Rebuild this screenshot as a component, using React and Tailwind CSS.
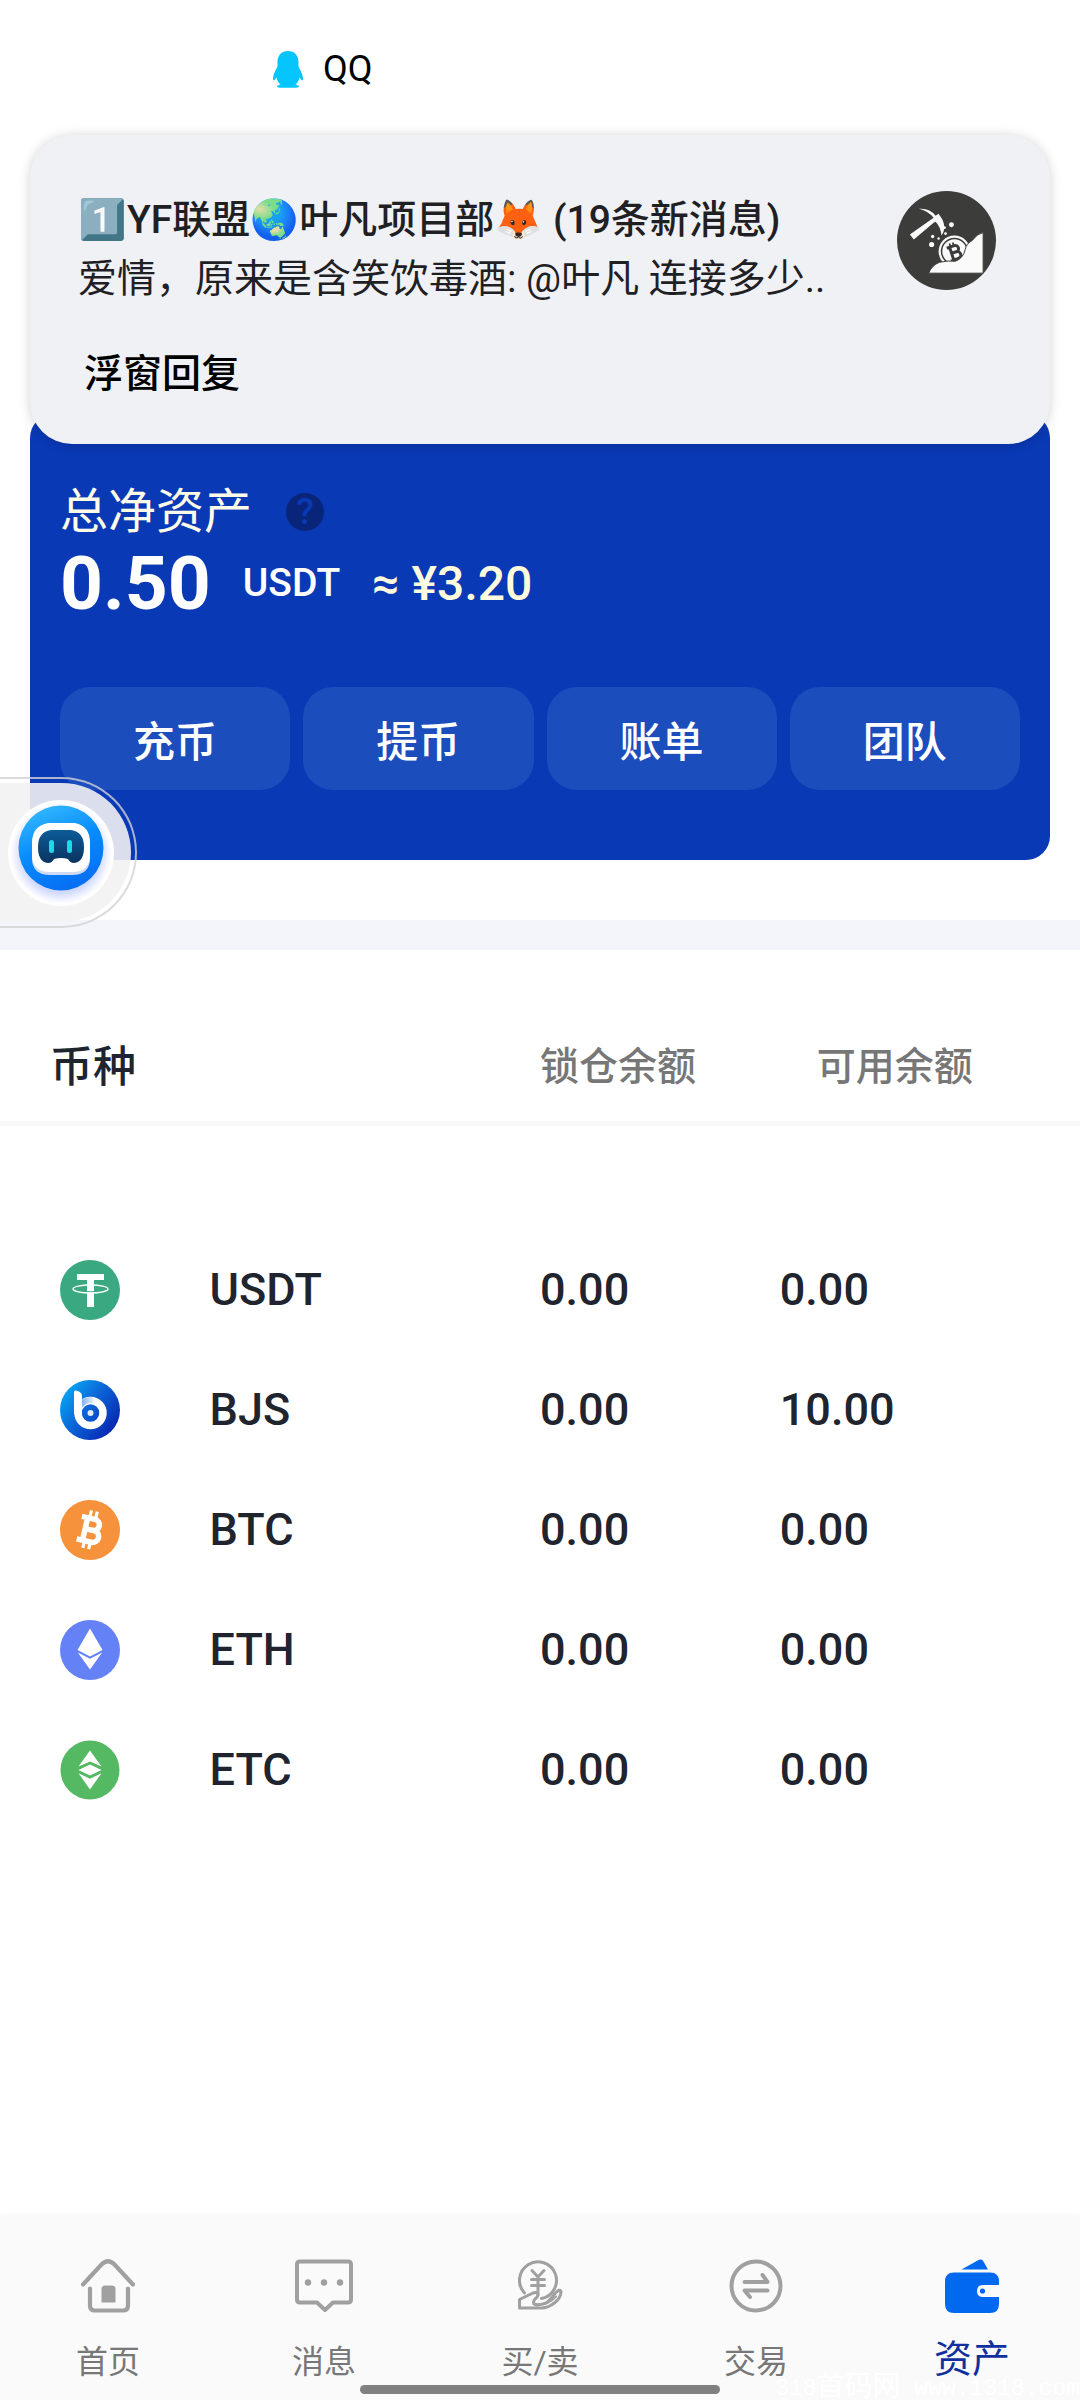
import React from "react";

const coins = [
  { name: "USDT", icon: UsdtIcon, locked: "0.00", available: "0.00" },
  { name: "BJS", icon: BjsIcon, locked: "0.00", available: "10.00" },
  { name: "BTC", icon: BtcIcon, locked: "0.00", available: "0.00" },
  { name: "ETH", icon: EthIcon, locked: "0.00", available: "0.00" },
  { name: "ETC", icon: EtcIcon, locked: "0.00", available: "0.00" },
];

const tabs = [
  { label: "首页", icon: HomeIcon },
  { label: "消息", icon: MessageIcon },
  { label: "买/卖", icon: BuySellIcon },
  { label: "交易", icon: TradeIcon },
  { label: "资产", icon: WalletIcon, active: true },
];

function UsdtIcon() {
  return (
    <svg viewBox="0 0 60 60" className="size-15" aria-hidden="true">
      <circle cx="30" cy="30" r="30" fill="#3aa981" />
      <path d="M17 14h27v6H34v27h-7V20H17z" fill="#fff" />
      <ellipse cx="30.500" cy="29" rx="17.500" ry="4" fill="none" stroke="#fff" strokeWidth="1.400" />
      <path d="M27 31.500q3.500 .3 7 0" stroke="#3aa981" strokeWidth=".9" fill="none" />
    </svg>
  );
}

function BjsIcon() {
  return (
    <svg viewBox="0 0 60 60" className="size-15" aria-hidden="true">
      <defs>
        <linearGradient id="bjs" x1="0" y1="0.200" x2="0.900" y2="0.900">
          <stop offset="0" stopColor="#06a9f4" />
          <stop offset="0.450" stopColor="#0b66d8" />
          <stop offset="1" stopColor="#0622ae" />
        </linearGradient>
        <linearGradient id="bjsTail" x1="0" y1="0" x2="1" y2="0">
          <stop offset="0" stopColor="#7fb2ee" />
          <stop offset="1" stopColor="#fff" />
        </linearGradient>
      </defs>
      <circle cx="30" cy="30" r="30" fill="url(#bjs)" />
      <path d="M14 12q0-2 2-1.500l3.500 1.200Q22 13 22 16v18h-8z" fill="#fff" />
      <circle cx="30.500" cy="33" r="12.500" fill="none" stroke="#fff" strokeWidth="7.500" />
      <path d="M22 19.500q7-4.500 14-1l-1 6q-6-4-13 3z" fill="url(#bjsTail)" />
      <circle cx="30.500" cy="33" r="3" fill="#e3ebfa" />
    </svg>
  );
}

function BtcIcon() {
  return (
    <svg viewBox="0 0 60 60" className="size-15" aria-hidden="true">
      <circle cx="30" cy="30" r="30" fill="#f6923c" />
      <g transform="rotate(13 30 30)" stroke="#fff" fill="none">
        <path d="M19 18.500h13.500a5.600 5.600 0 0 1 0 11.200H25M32.500 29.700h1.500a6 6 0 0 1 0 12H19M25 18v23" strokeWidth="5.500" />
        <path d="M27 10.500v7M33 10.500v7M27 42v7M33 42v7" strokeWidth="3.200" />
      </g>
    </svg>
  );
}

function EthIcon() {
  return (
    <svg viewBox="0 0 60 60" className="size-15" aria-hidden="true">
      <circle cx="30" cy="30" r="30" fill="#6481f6" />
      <path d="M30 8.500 42.500 30 30 36.500 17.500 30z" fill="#fff" />
      <path d="M17.800 32.500 30 38.700l12.200-6.200L30 49.500z" fill="#fff" />
    </svg>
  );
}

function EtcIcon() {
  return (
    <svg viewBox="0 0 60 60" className="size-15" aria-hidden="true">
      <circle cx="30" cy="30" r="29.500" fill="#55b862" />
      <path d="M30 10.500 41.500 26.500 30 21.500 18.500 26.500z" fill="#fff" />
      <path d="M18.500 30 30 24.500 41.500 30 30 35.500z" fill="#fff" />
      <path d="M18.500 33.200 30 38.800l11.500-5.600L30 49.500z" fill="#fff" />
    </svg>
  );
}

function HomeIcon() {
  return (
    <svg viewBox="0 0 54 54" className="size-[54px]" fill="none" stroke="#a0a0a0" strokeLinecap="round" aria-hidden="true">
      <path d="M2 25.500 20.500 5.500q6.500-6.500 13 0L52 25.500" strokeWidth="4.200" />
      <path d="M9 29.500v17q0 5 5 5h28q5 0 5-5v-17" strokeWidth="4.200" />
      <path d="M20.500 43.500V30q0-3.500 3.500-3.500h7q3.500 0 3.500 3.500v13.500z" fill="#a0a0a0" stroke="none" />
    </svg>
  );
}

function MessageIcon() {
  return (
    <svg viewBox="0 0 58 54" className="h-[54px] w-[58px]" fill="none" stroke="#a0a0a0" aria-hidden="true">
      <path d="M5 2.500h48q3 0 3 3v35q0 3-3 3H38l-8 7.500-8-7.500H5q-3 0-3-3v-35q0-3 3-3z" strokeWidth="4" strokeLinejoin="round" />
      <g fill="#a0a0a0" stroke="none">
        <circle cx="13" cy="23.500" r="3.200" />
        <circle cx="29" cy="23.500" r="3.200" />
        <circle cx="45" cy="23.500" r="3.200" />
      </g>
    </svg>
  );
}

function BuySellIcon() {
  return (
    <svg viewBox="0 0 54 54" className="size-[54px]" fill="none" stroke="#a0a0a0" strokeWidth="3" strokeLinejoin="round" strokeLinecap="round" aria-hidden="true">
      <path d="M11.500 34A18.500 18.500 0 1 1 28.500 39.500" />
      <path d="M19 11.500l6 6.500 6-6.500M25 18v17M18.500 20.500h13M18.500 26.500h13" />
      <path d="M6.500 40.500 20 34q5-1.500 5 2-.3 2-3 4-3 4 0 5.500 9 1 14-4l7-8q4-4 5-1 0 6-6 11-7 5.500-13 5.500H6.500z" />
      <path d="M23 45.500q12 1 20-8" strokeWidth="2" />
    </svg>
  );
}

function TradeIcon() {
  return (
    <svg viewBox="0 0 54 54" className="size-[54px]" fill="none" stroke="#a0a0a0" strokeLinecap="round" strokeLinejoin="round" aria-hidden="true">
      <circle cx="27" cy="27" r="24.500" strokeWidth="4" />
      <path d="M15.500 23h23l-5-7M38.500 31.500h-23l5.500 6.500" strokeWidth="4" />
    </svg>
  );
}

function WalletIcon() {
  return (
    <svg viewBox="0 0 54 54" className="size-[54px]" fill="#0168f0" aria-hidden="true">
      <path d="M16.500 10.500 34 .8q2.500-1.200 4 1L43 10.500z" />
      <path d="M9 13.500h36q9 0 9 9V26H38q-6 0-6 6t6 6h16v7q0 9-9 9H9q-9 0-9-9V22.500q0-9 9-9z" />
      <circle cx="37.500" cy="32" r="2.600" />
    </svg>
  );
}

function QqIcon() {
  return (
    <svg viewBox="0 0 30 37" className="h-[37px] w-[30px]" fill="#06c5fd" aria-hidden="true">
      <path d="M15 0C8.500 0 4.500 4.500 4.500 11v4.500C2 20 .4 23.500 0 27c-.2 2.500.6 3 1.600 2l1.900-2.500c.6 3 2 5.400 4 7.200-2.500.4-3.500 1-3.500 1.700 0 1.200 4 1.400 11 1.400s11-.2 11-1.400c0-.7-1-1.300-3.500-1.700 2-1.800 3.400-4.200 4-7.200l1.900 2.500c1 1 1.800.5 1.600-2-.4-3.500-2-7-4.500-11.500V11C25.500 4.500 21.500 0 15 0z" />
    </svg>
  );
}

function GroupAvatar() {
  return (
    <svg viewBox="0 0 100 100" className="size-[99px] shrink-0" role="img" aria-label="群头像">
      <circle cx="50" cy="50" r="50" fill="#3c3c3a" />
      <path d="M22 18q11-1 17 7l3-2 4 6q4 9-1 16-1-9-6-14l-2 1L17 49l-4-5 24-17q-6-7-15-9z" fill="#fafafa" />
      <g fill="#fafafa">
        <circle cx="55" cy="34" r="2.500" />
        <circle cx="48" cy="37" r="1.400" />
        <circle cx="49" cy="43" r="1.400" />
        <circle cx="36" cy="46" r="1.700" />
        <circle cx="42" cy="48" r="1.200" />
        <circle cx="35" cy="54" r="2.600" />
      </g>
      <circle cx="58" cy="61" r="16" fill="#fafafa" />
      <circle cx="58" cy="61" r="13" fill="none" stroke="#3c3c3a" strokeWidth="1.500" />
      <g transform="rotate(-18 58 62)" fill="none" stroke="#3c3c3a">
        <path d="M52 55.500h8a3 3 0 0 1 0 6.500h-5M60 62a3.300 3.300 0 0 1 0 7h-8M55 55v14" strokeWidth="3" />
        <path d="M56 52v3M59.500 52v3M56 69v3M59.500 69v3" strokeWidth="1.800" />
      </g>
      <path d="M32 83q3-8 11-11 9-2 16-1 8-3 10-12 1-6 7-9 5-7 11-8V83z" fill="#fafafa" stroke="#3c3c3a" />
    </svg>
  );
}

function RobotIcon() {
  return (
    <svg viewBox="0 0 106 106" className="size-[106px]" aria-hidden="true">
      <defs>
        <linearGradient id="robotBg" x1="0.200" y1="0" x2="0.600" y2="1">
          <stop offset="0" stopColor="#35baff" />
          <stop offset="0.500" stopColor="#078bff" />
          <stop offset="1" stopColor="#066ef2" />
        </linearGradient>
        <radialGradient id="robotHalo" cx="0.500" cy="0.500" r="0.500">
          <stop offset="0.740" stopColor="#d0d9fc" />
          <stop offset="0.940" stopColor="#fdfdff" />
          <stop offset="1" stopColor="#fff" />
        </radialGradient>
        <linearGradient id="robotFace" x1="0" y1="0" x2="0" y2="1">
          <stop offset="0" stopColor="#0c5c98" />
          <stop offset="1" stopColor="#0a3360" />
        </linearGradient>
      </defs>
      <circle cx="53" cy="53" r="53" fill="url(#robotHalo)" />
      <circle cx="53" cy="48" r="42.500" fill="url(#robotBg)" />
      <path d="M40 26h27q15 3 15 20v12q0 17-18 17H42q-18 0-18-17V46q0-17 16-20z" fill="#cfd9f2" />
      <path d="M40 23h27q15 3 15 20v12q0 17-18 17H42q-18 0-18-17V43q0-17 16-20z" fill="#fff" />
      <path d="M43 30h20q13 2 13 17 0 15-10 16-4 0-6-4-7-2-14 0-2 4-6 4-10-1-10-16 0-15 13-17z" fill="url(#robotFace)" />
      <rect x="41" y="40" width="5" height="13" rx="2.500" fill="#18dbe8" />
      <rect x="59" y="40" width="5" height="13" rx="2.500" fill="#18dbe8" />
    </svg>
  );
}

function Notification() {
  return (
    <aside className="absolute inset-x-0 top-0 z-10 px-[30px]">
      <div className="flex h-[135px] items-center gap-5 pt-[3px] pl-[243px]">
        <QqIcon />
        <span className="text-[36px] leading-none text-black">QQ</span>
      </div>
      <div className="rounded-[42px] bg-[#f0f1f5] px-[48px] pt-[56px] pb-[40px] shadow-[0_1px_12px_rgba(0,0,0,0.18)]">
        <div className="flex items-start justify-between pr-[6px]">
          <div className="text-[39px] text-[#1f2023]">
            <h2 className="text-[39px] leading-[58px] font-medium whitespace-nowrap">
              1️⃣YF联盟🌏叶凡项目部🦊 (19条新消息)
            </h2>
            <p className="leading-[60px] whitespace-nowrap">爱情，原来是含笑饮毒酒: @叶凡 连接多少..</p>
          </div>
          <GroupAvatar />
        </div>
        <button type="button" className="mt-[35px] ml-[6px] block text-[39px] leading-[60px] font-medium text-black">
          浮窗回复
        </button>
      </div>
    </aside>
  );
}

function AssetCard() {
  return (
    <section className="mx-[30px] rounded-[24px] bg-[#0a39b6] px-[30px] pt-[68px] pb-[70px] text-white">
      <div className="flex items-center gap-[34px]">
        <h1 className="text-[48px] leading-[60px] text-[#fffde8]">总净资产</h1>
        <button type="button" aria-label="帮助" className="flex size-[38px] items-center justify-center rounded-full bg-[#08257a] text-[36px] leading-none font-medium text-[#0a39b6]">
          ?
        </button>
      </div>
      <div className="flex h-[83px] items-center font-medium">
        <strong className="text-[75px] leading-none font-bold">0.50</strong>
        <span className="ml-[32px] text-[39px] leading-none">USDT</span>
        <span className="ml-[32px] text-[48px] leading-none text-[#fffbdc]">≈ ¥3.20</span>
      </div>
      <div className="mt-[62px] grid grid-cols-4 gap-[13px]">
        {["充币", "提币", "账单", "团队"].map((label) => (
          <button key={label} type="button" className="h-[103px] rounded-[30px] bg-[#1c4dbd] pt-2 text-[42px] font-medium">
            {label}
          </button>
        ))}
      </div>
    </section>
  );
}

function CoinTable() {
  return (
    <table className="w-full table-fixed border-collapse text-left text-[#20242e]">
      <colgroup>
        <col className="w-[19.400%]" />
        <col className="w-[30.600%]" />
        <col className="w-[22.200%]" />
        <col />
      </colgroup>
      <thead>
        <tr className="h-[173px] border-b-[5px] border-[#f8f8f8]">
          <th colSpan={2} className="pt-16 pl-[50px] text-[43px] font-medium">币种</th>
          <th className="pt-16 text-[39px] font-medium whitespace-nowrap text-[#777]">锁仓余额</th>
          <th className="pt-16 pl-[37px] text-[39px] font-medium whitespace-nowrap text-[#777]">可用余额</th>
        </tr>
      </thead>
      <tbody className="before:block before:h-[104px]">
        {coins.map(({ name, icon: Icon, locked, available }) => (
          <tr key={name} className="h-[120px] text-[45px] font-medium">
            <td className="pl-15"><Icon /></td>
            <td>{name}</td>
            <td>{locked}</td>
            <td>{available}</td>
          </tr>
        ))}
      </tbody>
    </table>
  );
}

function TabBar() {
  return (
    <nav className="relative mt-auto grid grid-cols-5 bg-[#fafafa] pt-[43px] pb-[18px] shadow-[0_-1px_4px_rgba(0,0,0,0.04)]">
      {tabs.map(({ label, icon: Icon, active }) => (
        <a key={label} href="#" aria-current={active ? "page" : undefined} className="flex flex-col items-center gap-[29px]">
          <Icon />
          {active ? (
            <span className="text-[38px] leading-[34px] text-[#10309f]">{label}</span>
          ) : (
            <span className="text-[32px] leading-[40px] text-[#777]">{label}</span>
          )}
        </a>
      ))}
      <div className="absolute inset-x-0 bottom-[6px] mx-auto h-[9px] w-1/3 rounded-full bg-[#808080]" />
      <div className="absolute right-0 bottom-0 flex h-[22px] items-center font-['Liberation_Mono','Noto_Sans_CJK_SC',monospace] text-[23px] leading-none whitespace-pre text-white">
        318<span className="text-[28px] leading-none">首码网</span> www.1318.com
      </div>
    </nav>
  );
}

export default function App() {
  return (
    <div className="relative flex min-h-screen flex-col bg-white font-['Roboto','Noto_Sans_CJK_SC',sans-serif]">
      <Notification />
      <main className="pt-[414px]">
        <div className="relative">
          <AssetCard />
          <button
            type="button"
            aria-label="智能助手"
            className="absolute -bottom-[68px] left-0 rounded-r-full border-y-2 border-r-2 border-[#d2d3d6]/80 py-[4px] pr-[4px]"
          >
            <span className="flex h-[139px] items-center rounded-r-full bg-[#f2f2f3]/90 pr-[17px] pl-2">
              <RobotIcon />
            </span>
          </button>
        </div>
        <div className="mt-[60px] h-[30px] bg-[#f4f5fa]" />
        <CoinTable />
      </main>
      <TabBar />
    </div>
  );
}
